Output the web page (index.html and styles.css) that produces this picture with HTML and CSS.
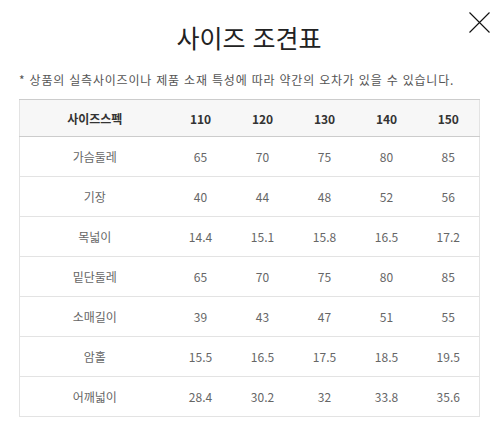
FILE: index.html
```html
<!DOCTYPE html>
<html lang="ko">
<head>
<meta charset="utf-8">
<link rel="stylesheet" href="styles.css">
</head>
<body>
<div class="modal">
  <header class="head">
    <h1 class="title">사이즈 조견표</h1>
    <button class="close" aria-label="닫기">
      <svg width="21" height="21" viewBox="0 0 21 21"><path d="M0.5 0.5L20.5 20.5M20.5 0.5L0.5 20.5" stroke="#111" stroke-width="1.1" fill="none"/></svg>
    </button>
  </header>
  <p class="note">* 상품의 실측사이즈이나 제품 소재 특성에 따라 약간의 오차가 있을 수 있습니다.</p>
  <table class="size-table">
    <thead>
      <tr><th class="label">사이즈스펙</th><th>110</th><th>120</th><th>130</th><th>140</th><th>150</th></tr>
    </thead>
    <tbody>
      <tr><td>가슴둘레</td><td>65</td><td>70</td><td>75</td><td>80</td><td>85</td></tr>
      <tr><td>기장</td><td>40</td><td>44</td><td>48</td><td>52</td><td>56</td></tr>
      <tr><td>목넓이</td><td>14.4</td><td>15.1</td><td>15.8</td><td>16.5</td><td>17.2</td></tr>
      <tr><td>밑단둘레</td><td>65</td><td>70</td><td>75</td><td>80</td><td>85</td></tr>
      <tr><td>소매길이</td><td>39</td><td>43</td><td>47</td><td>51</td><td>55</td></tr>
      <tr><td>암홀</td><td>15.5</td><td>16.5</td><td>17.5</td><td>18.5</td><td>19.5</td></tr>
      <tr><td>어깨넓이</td><td>28.4</td><td>30.2</td><td>32</td><td>33.8</td><td>35.6</td></tr>
    </tbody>
  </table>
</div>
</body>
</html>
```
FILE: styles.css
```css
* { box-sizing: border-box; }
html, body { margin: 0; padding: 0; background: #fff; }
body {
  font-family: "Noto Sans CJK KR", "Noto Sans", sans-serif;
  color: #333;
}
.modal {
  width: 497px;
  padding: 0 18px 0 19px;
}
.head {
  position: relative;
  height: 70px;
  display: flex;
  align-items: center;
  justify-content: center;
  padding-top: 4px;
}
.title {
  margin: 0;
  font-size: 25px;
  font-weight: 400;
  color: #222;
  letter-spacing: 0;
}
.close {
  position: absolute;
  top: 12px;
  right: -11px;
  width: 21px;
  height: 21px;
  padding: 0;
  border: 0;
  background: none;
  display: block;
}
.close svg { display: block; }
.note {
  margin: 0;
  height: 29px;
  font-size: 12px;
  line-height: 20px;
  color: #555;
  letter-spacing: 0.8px;
}
.size-table {
  width: 460px;
  border-collapse: collapse;
  table-layout: fixed;
  font-size: 12px;
}
.size-table th, .size-table td {
  text-align: center;
  padding: 0;
  width: 62px;
}
.size-table th.label { width: 150px; }
.size-table thead tr {
  background: #f7f7f7;
  border-top: 1px solid #cccccc;
  border-bottom: 1px solid #cccccc;
}
.size-table th {
  height: 37px;
  font-weight: 700;
  color: #333;
}
.size-table tbody tr {
  border-bottom: 1px solid #e3e3e3;
}
.size-table td {
  height: 40px;
  color: #666;
}
.size-table { border-left: 1px solid #e3e3e3; border-right: 1px solid #e3e3e3; }
```
